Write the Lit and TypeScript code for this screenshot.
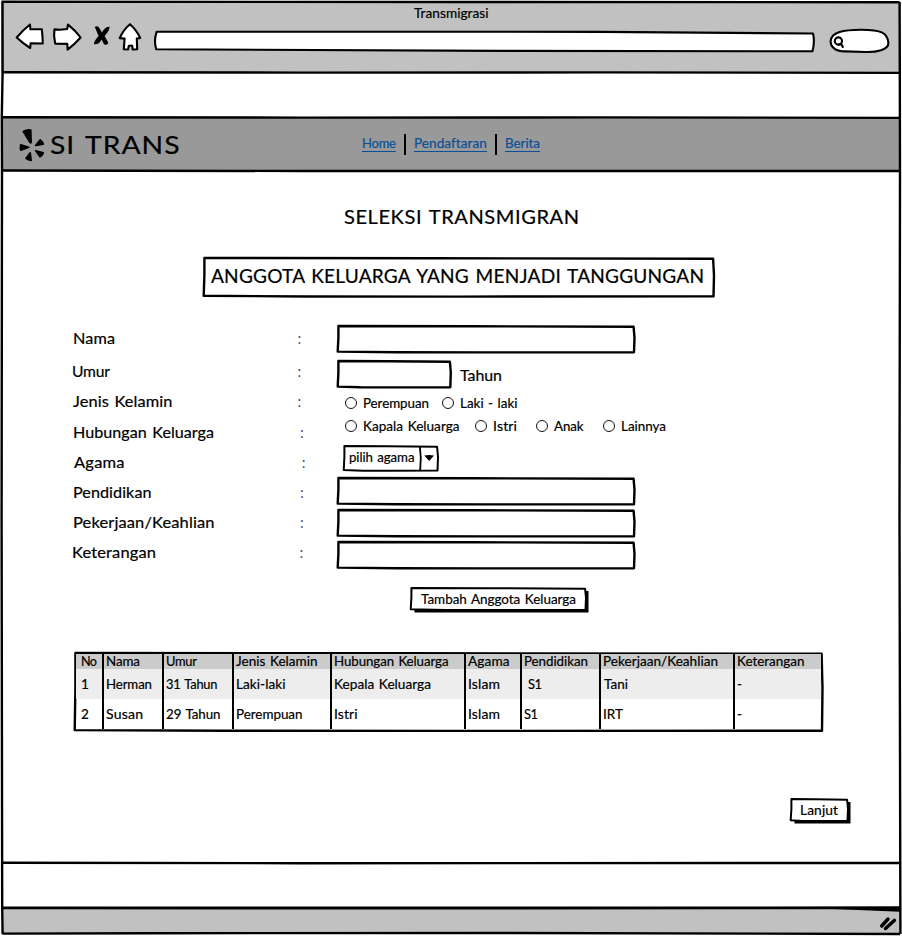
import { LitElement, html, svg, css, nothing } from "lit";
import { customElement, property } from "lit/decorators.js";
import { styleMap } from "lit/directives/style-map.js";

/** One line of text, widened and tracked evenly to fill a given measure. */
@customElement("fit-text")
class FitText extends LitElement {
  @property() text = "";
  @property({ type: Number }) w = 0;

  static styles = css`
    :host { display: inline-block; white-space: pre; flex: none; word-spacing: 0.08em; -webkit-text-stroke: 0.2px currentColor; }
    span { display: inline-block; transform-origin: 0 50%; }
  `;

  updated() {
    const span = this.renderRoot.querySelector("span") as HTMLSpanElement;
    this.style.width = `${this.w}px`;
    span.style.letterSpacing = "0px";
    span.style.transform = "none";
    const natural = span.getBoundingClientRect().width;
    if (this.text.length > 1) {
      const stretch = Math.pow(this.w / natural, 0.65);
      span.style.letterSpacing = `${(this.w / stretch - natural) / (this.text.length - 1)}px`;
      span.style.transform = `scaleX(${stretch})`;
    }
  }

  render() {
    return html`<span>${this.text}</span>`;
  }
}

/** Rectangle with a hand-drawn outline and an optional hard shadow. */
@customElement("sketch-box")
class SketchBox extends LitElement {
  @property({ type: Number }) w = 100;
  @property({ type: Number }) h = 26;
  @property({ type: Number }) line = 2.4;
  @property({ type: Boolean }) shadow = false;

  static styles = css`
    :host { display: block; position: relative; flex: none; }
    .outline { position: absolute; left: 0; top: 0; overflow: visible; }
    .inner { position: relative; display: flex; align-items: center; height: 100%; }
  `;

  render() {
    const { w, h } = this;
    const d = `M0.4 0 L${w * 0.45} 0.2 L${w - 0.4} 0.8 L${w + 0.5} ${h * 0.45} L${w} ${h + 0.4}
      L${w * 0.5} ${h + 0.6} L${w * 0.2} ${h + 0.5} L-0.3 ${h - 0.2} L0.4 ${h * 0.45} Z`;
    return html`
      <style>:host { width: ${w}px; height: ${h}px; }</style>
      <svg class="outline" width=${w} height=${h}>
        ${this.shadow
          ? svg`<path d="M3.5 3 H${w + 3} V${h + 3} H3.5 Z" fill="#000" />`
          : nothing}
        <path d=${d} fill="#fff" stroke="#000" stroke-width=${this.line} stroke-linejoin="round" />
      </svg>
      <div class="inner"><slot></slot></div>
    `;
  }
}

type Cell = [text: string, width: number, indent?: number];

const LABELS: { text: string; w: number; h: number; x: number; colon: number }[] = [
  { text: "Nama", w: 42, h: 33, x: 73, colon: 297.5 },
  { text: "Umur", w: 38, h: 33, x: 72, colon: 297.5 },
  { text: "Jenis Kelamin", w: 99.5, h: 28, x: 73, colon: 297.5 },
  { text: "Hubungan Keluarga", w: 141, h: 33, x: 73, colon: 300 },
  { text: "Agama", w: 50.5, h: 28, x: 73.5, colon: 301.7 },
  { text: "Pendidikan", w: 78.5, h: 32, x: 72.5, colon: 300 },
  { text: "Pekerjaan/Keahlian", w: 141.5, h: 28, x: 72.5, colon: 300 },
  { text: "Keterangan", w: 84, h: 32, x: 72, colon: 299.5 },
];

const COLUMNS = [25.5, 60, 70, 98, 134, 56, 79, 134, 88.5];

const HEAD: Cell[] = [
  ["No", 16], ["Nama", 34], ["Umur", 31], ["Jenis Kelamin", 81.5], ["Hubungan Keluarga", 114.5],
  ["Agama", 41.5], ["Pendidikan", 64], ["Pekerjaan/Keahlian", 115], ["Keterangan", 67.5],
];
const ROWS: Cell[][] = [
  [["1", 7], ["Herman", 46], ["31 Tahun", 51.5], ["Laki-laki", 49.5], ["Kepala Keluarga", 97],
    ["Islam", 32], ["S1", 14, 4], ["Tani", 24, 1], ["-", 5]],
  [["2", 7], ["Susan", 37], ["29 Tahun", 54.5], ["Perempuan", 66.5], ["Istri", 23.5],
    ["Islam", 32], ["S1", 14], ["IRT", 20], ["-", 5]],
];

@customElement("app-root")
class AppRoot extends LitElement {
  static styles = css`
    :host {
      display: block;
      position: relative;
      width: 902px;
      height: 936px;
      overflow: hidden;
      background: #fff;
      color: #000;
      font: 13.5px/16px Lato, "Open Sans", sans-serif;
    }
    .window { display: flex; flex-direction: column; height: 936px; }
    .frame { position: absolute; inset: 0; pointer-events: none; }

    .chrome { height: 72px; margin-top: 1px; background: #c1c1c1; flex: none; margin-left: 1px; margin-right: 2px; }
    .title { height: 21px; padding: 4px 0 0 412.5px; box-sizing: border-box; }
    .tools { display: flex; }
    .tools svg { flex: none; fill: #fff; stroke: #000; stroke-width: 2.1; stroke-linejoin: round; stroke-linecap: round; }
    .back { margin-left: 14px; }
    .forward { margin-left: 7px; }
    .stop { margin-left: 10px; }
    .home { margin-left: 6px; }
    .address { margin-left: 11px; }
    .search { margin-left: 12px; }

    .spacer { height: 45px; flex: none; }
    .navbar { height: 53px; background: #999; display: flex; align-items: center; flex: none; margin: 0 2px; box-sizing: border-box; }
    .logo { margin-left: 17px; flex: none; }
    .brand { margin: -2px 0 0 4.5px; font-size: 25.5px; line-height: 30px; }
    .links { display: flex; align-items: center; margin-left: 183px; margin-top: -1px; }
    .link { color: #0b4f96; border-bottom: 1px solid #0b4f96; height: 14px; line-height: 13px; }
    .bar { width: 2px; height: 21px; background: #000; margin: 0 8px; flex: none; }

    .page { height: 692px; flex: none; display: flex; flex-direction: column; box-sizing: border-box; padding-top: 34px; }
    .heading { font-size: 18.5px; line-height: 24px; margin-left: 343.5px; }
    .banner { margin: 28.5px 0 0 204.3px; font-size: 18.5px; line-height: 24px; }
    .banner fit-text { margin: -1px 0 0 6.7px; }

    .form { display: flex; margin-top: 25.5px; height: 246px; font-size: 16px; line-height: 20px; }
    .labels { width: 338.3px; flex: none; }
    .label { display: flex; align-items: center; }
    .label fit-text { flex: none; }
    .colon { color: #556; font-size: 15px; }
    .controls { display: flex; flex-direction: column; padding-top: 5px; }
    .age { display: flex; align-items: center; margin-top: 9px; flex: none; }
    .age fit-text { margin: 3px 0 0 9.3px; }
    .radios { display: flex; align-items: center; height: 23px; flex: none; font-size: 13.5px; line-height: 16px; margin: 0.3px 0 0 6.7px; }
    .radios.first { margin-top: 5px; }
    .option { display: flex; align-items: center; gap: 6px; }
    .dot { width: 12px; height: 12px; box-sizing: border-box; border: 1.4px solid #111; border-radius: 50%; background: #fff; }
    .select { margin: 8.3px 0 0 5.9px; font-size: 13.5px; line-height: 16px; }
    .select fit-text { margin: -2px 0 0 5px; }
    .arrow { margin-left: 4.5px; overflow: visible; }
    .entry { margin-top: 7.3px; }
    .entry + .entry { margin-top: 6.8px; }
    .entry + .entry.tight { margin-top: 6.2px; }

    .submit { margin: 21px 0 0 411px; }
    .submit fit-text { margin-left: 10px; }

    .tablewrap { margin: 43.2px 0 0 75.4px; }
    .table { width: 745px; height: 77px; margin-left: 1.1px; display: flex; flex-direction: column; }
    .row { display: flex; height: 30px; }
    .row.head { height: 15.5px; margin-top: 1px; background: #cbcbcb; }
    .row.head fit-text { margin-top: -1.5px; }
    .row.odd { background: #ededed; }
    .cell { box-sizing: border-box; flex: none; display: flex; align-items: center; padding-left: 2px; border-left: 2px solid #000; line-height: 16px; }
    .cell:first-child { border-left: 0; padding-left: 4.5px; }
    .cell:last-child { flex: 1; }
    .next { margin: 69.3px 0 0 791px; }
    .next fit-text { margin-left: 9px; }

    .gap { height: 44px; flex: none; }
    .status { height: 26px; background: #c1c1c1; flex: none; margin: 0 2px; }
  `;

  private option(text: string, w: number, gap: number) {
    return html`<span class="option" style=${styleMap({ marginLeft: `${gap}px` })}
      ><span class="dot"></span><fit-text .text=${text} .w=${w}></fit-text></span>`;
  }

  private row(cells: Cell[], kind: string) {
    return html`<div class="row ${kind}">
      ${cells.map(([text, w, indent = 0], i) => html`
        <div class="cell" style=${styleMap({ width: `${COLUMNS[i]}px` })}>
          <fit-text style=${styleMap({ marginLeft: `${indent}px` })} .text=${text} .w=${w}></fit-text>
        </div>`)}
    </div>`;
  }

  private chrome() {
    return html`<header class="chrome">
      <div class="title"><fit-text text="Transmigrasi" w="74.5"></fit-text></div>
      <div class="tools">
        <svg class="back" width="30" height="32" viewBox="15 22 30 32">
          <path d="M16.7 37.5 Q23 30 30 24.5 L30.4 29.3 L41.8 29.2 Q42.6 36 42.8 43.5 L30.6 43.4 L30.2 48 Q23 43.5 16.7 37.5Z" />
        </svg>
        <svg class="forward" width="30" height="32" viewBox="52 22 30 32">
          <path d="M54.4 29.4 L60 29.8 L67.2 29 L68 24.6 Q75.5 30.5 80.6 37.5 Q75 44 67.6 49.6 L67.3 43.9 L55.2 43.6 Q53.4 36 54.4 29.4Z" />
        </svg>
        <svg class="stop" width="20" height="32" viewBox="92 22 20 32">
          <path d="M94.8 27 Q97.8 25 99.6 28.6 L102 32.4 Q104.8 26.6 109.6 26.8 Q109.8 30.4 104.6 36 L108.2 42.4 Q107.8 46 104 44.2 L101.7 39.4 Q98.5 45 94 44.2 Q93.6 41.6 98.6 36Z" fill="#000" stroke="none" />
        </svg>
        <svg class="home" width="24" height="32" viewBox="118 22 24 32">
          <path d="M130 24.2 Q137 30.5 140.2 38 L136.8 38.6 L137.2 49.2 L132.7 49.5 L132.2 46 Q130.5 45 128.8 46 L128 49.5 L123.8 49.3 L124.6 38.6 L119.7 38.1 Q123.5 29.5 130 24.2Z" />
        </svg>
        <svg class="address" width="663" height="32" viewBox="153 22 663 32">
          <path d="M156.6 31.8 L420 31.7 L600 31.9 L813 33.5 Q815 41 812.5 51.3 L500 50.9 L156.2 49.2 Q153.6 41 156.6 31.8Z" />
        </svg>
        <svg class="search" width="62" height="32" viewBox="828 22 62 32">
          <path d="M830.6 41.5 C831 31.5 844 30 861 29.8 C882 29.8 887.5 33 888.4 43 C888.5 50 876 52.3 866 52 L845 51.4 C835 51.5 830.6 46.5 830.6 41.5Z" />
          <circle cx="838.4" cy="41" r="3.6" />
          <path d="M838.6 44.6 L841.4 44.2 L842.8 47" />
        </svg>
      </div>
    </header>`;
  }

  private navbar() {
    return html`<nav class="navbar">
      <svg class="logo" width="26" height="34" viewBox="19 128 26 34">
        <g stroke="#000" stroke-width="1.6" stroke-linejoin="round">
          <path d="M23.3 131.5 Q27 129.2 30.8 130 L31.2 142.8 L30.2 142.8Z" />
          <path d="M35.6 145.5 L40.3 139.8 Q42.8 141.8 43.3 144.2Z" />
          <path d="M20.6 144.8 Q20 147.8 20.8 150.2 L28.8 147.2Z" />
          <path d="M30.2 152.8 L26 158.3 Q28.2 160.2 31.2 160.4Z" />
          <path d="M35.7 150.8 L43.3 152.8 Q42.5 155.5 40 156.9Z" />
        </g>
      </svg>
      <fit-text class="brand" text="SI TRANS" w="129.5"></fit-text>
      <div class="links">
        <fit-text class="link" text="Home" w="34"></fit-text>
        <span class="bar"></span>
        <fit-text class="link" text="Pendaftaran" w="72.5"></fit-text>
        <span class="bar"></span>
        <fit-text class="link" text="Berita" w="35"></fit-text>
      </div>
    </nav>`;
  }

  private form() {
    return html`<div class="form">
      <div class="labels">
        ${LABELS.map((l) => html`
          <div class="label" style=${styleMap({ height: `${l.h}px`, paddingLeft: `${l.x}px` })}>
            <fit-text .text=${l.text} .w=${l.w}></fit-text>
            <span class="colon" style=${styleMap({ marginLeft: `${l.colon - l.x - l.w}px` })}>:</span>
          </div>`)}
      </div>
      <div class="controls">
        <sketch-box w="296" h="25.8"></sketch-box>
        <div class="age">
          <sketch-box w="112.3" h="25.8"></sketch-box>
          <fit-text text="Tahun" w="42"></fit-text>
        </div>
        <div class="radios first">
          ${this.option("Perempuan", 66, 0)} ${this.option("Laki - laki", 57.5, 13)}
        </div>
        <div class="radios">
          ${this.option("Kapala Keluarga", 96.5, 0)} ${this.option("Istri", 24, 15.5)}
          ${this.option("Anak", 29.5, 19)} ${this.option("Lainnya", 45, 19.5)}
        </div>
        <sketch-box class="select" w="93.5" h="24.2" line="2">
          <fit-text text="pilih agama" w="65.5"></fit-text>
          <svg class="arrow" width="18" height="24">
            <path d="M0.8 0 L1.8 12 L1.2 24" fill="none" stroke="#000" stroke-width="1.8" />
            <path d="M5.3 9.4 Q10 8.4 15 9.4 L10.2 15Z" />
          </svg>
        </sketch-box>
        <sketch-box class="entry" w="296" h="25.8"></sketch-box>
        <sketch-box class="entry" w="296" h="25.8"></sketch-box>
        <sketch-box class="entry tight" w="296" h="25.8"></sketch-box>
      </div>
    </div>`;
  }

  render() {
    return html`
      <div class="window">
        ${this.chrome()}
        <div class="spacer"></div>
        ${this.navbar()}
        <main class="page">
          <fit-text class="heading" text="SELEKSI TRANSMIGRAN" w="235"></fit-text>
          <sketch-box class="banner" w="509.5" h="38">
            <fit-text text="ANGGOTA KELUARGA YANG MENJADI TANGGUNGAN" w="493"></fit-text>
          </sketch-box>
          ${this.form()}
          <sketch-box class="submit" w="174.5" h="21.5" line="2" shadow>
            <fit-text text="Tambah Anggota Keluarga" w="155"></fit-text>
          </sketch-box>
          <sketch-box class="tablewrap" w="747" h="77.3">
            <div class="table">
              ${this.row(HEAD, "head")} ${this.row(ROWS[0], "odd")} ${this.row(ROWS[1], "")}
            </div>
          </sketch-box>
          <sketch-box class="next" w="56.5" h="21.5" line="2" shadow>
            <fit-text text="Lanjut" w="38"></fit-text>
          </sketch-box>
        </main>
        <div class="gap"></div>
        <footer class="status"></footer>
      </div>
      <svg class="frame" width="902" height="936" fill="none" stroke="#000" stroke-width="2.4">
        <path d="M1.5 1.8 L450 2 L899.5 2.2" />
        <path d="M2.5 2 L2.6 72 L1.8 117 L2 170 L1.6 520 L2.2 907 L2.6 934" />
        <path d="M899.6 2 L899.8 72 L900 170 L899.5 520 L900.4 934" />
        <path d="M2 72.2 L300 72.6 L600 72.4 L900 72.9" />
        <path d="M2 117.2 L300 117.6 L600 117.4 L900 117.9" />
        <path d="M2 170.5 L300 171 L600 171 L900 171" />
        <path d="M2 862.7 L300 863.2 L900 863" />
        <path d="M2 907.9 L300 908 L900 907.8" stroke-width="2.9" />
        <path d="M810 908 L900 908 L900 911.8 Z" fill="#000" stroke="none" />
        <path d="M2.4 933.6 L150 933.2 L500 933 L900 934" />
        <path d="M881.7 926 L888 919 M885.5 928.5 L894.5 920.3" stroke-width="3.4" stroke-linecap="round" />
      </svg>
    `;
  }
}
